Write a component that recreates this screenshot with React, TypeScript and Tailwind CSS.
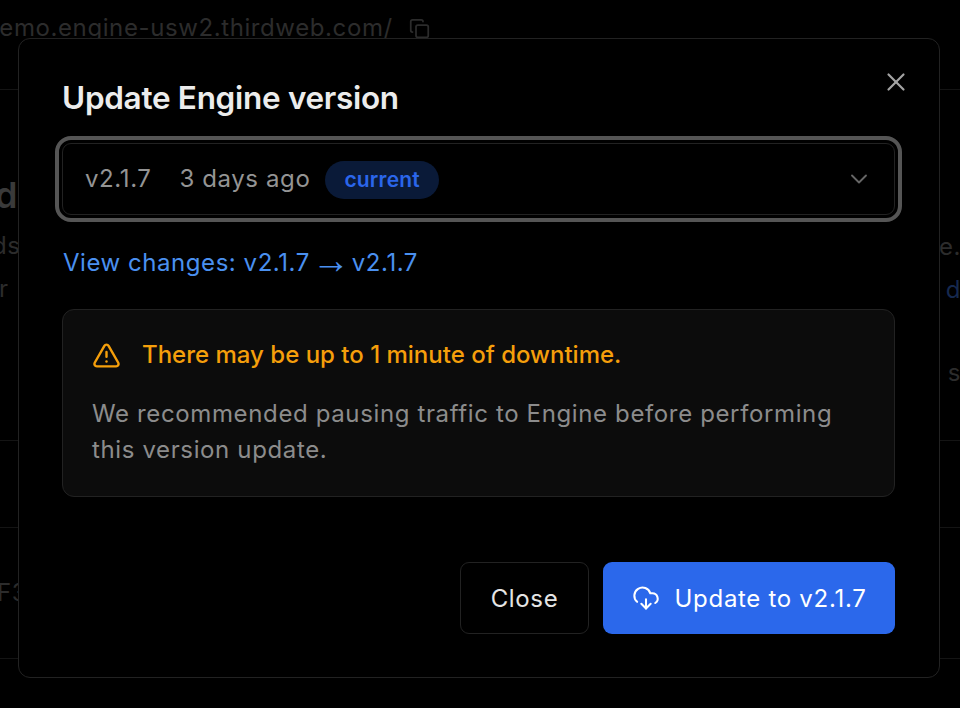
import { ChevronDown, CloudDownload, Copy, TriangleAlert, X } from "lucide-react";

function BackgroundPage() {
  return (
    <div className="h-[708px] w-[960px] overflow-hidden bg-black tracking-[0.6px]">
      <div className="flex h-[90px] items-start gap-4 border-b border-[#141414] pt-[10px]">
        <span className="-ml-[16px] text-[24px] leading-[36px] whitespace-nowrap text-[#2c2c2c]">
          demo.engine-usw2.thirdweb.com/
        </span>
        <Copy className="mt-[8px] size-[21px] text-[#2c2c2c]" strokeWidth={2} />
      </div>
      <div className="flex h-[351px] justify-between border-b border-[#141414] text-[#2c2c2c]">
        <div className="flex flex-col">
          <span className="mt-[80px] -ml-[5px] text-[36px] leading-[50px] font-semibold text-[#3a3a3a]">d</span>
          <span className="-ml-[8px] mt-[8px] text-[24px] leading-[36px]">ds</span>
          <span className="-ml-[1px] mt-[7px] text-[24px] leading-[36px]">r</span>
        </div>
        <div className="flex flex-col items-end">
          <span className="mt-[139px] -mr-[1px] text-[24px] leading-[36px]">e.</span>
          <span className="mt-[7px] -mr-[1px] text-[24px] leading-[36px] text-[#16294f]">d</span>
          <span className="mt-[47px] -mr-[1px] text-[24px] leading-[36px]">s</span>
        </div>
      </div>
      <div className="h-[87px] border-b border-[#141414]" />
      <div className="flex h-[131px] items-center border-b border-[#141414] text-[24px] text-[#2c2c2c]">
        <span className="-ml-[3px]">F3</span>
      </div>
    </div>
  );
}

function VersionSelect() {
  return (
    <div className="flex h-[72px] items-center justify-between rounded-[9px] border border-[#222222] px-[22px] outline-[4.5px] outline-offset-[3px] outline-[#555555]">
      <div className="flex items-center text-[24px] tracking-[0.6px] text-[#949494]">
        <span>v2.1.7</span>
        <span className="ml-[28px]">3 days ago</span>
        <span className="mt-[2px] ml-[15px] flex h-[38px] items-center rounded-full bg-[#0a1a38] px-[19px] text-[21px] font-semibold tracking-[0.2px] text-[#2b66ea]">
          current
        </span>
      </div>
      <ChevronDown className="-mr-[1px] size-[28px] text-[#666666]" strokeWidth={1.6} />
    </div>
  );
}

function DowntimeNotice() {
  return (
    <div className="mt-[28px] h-[188px] rounded-[12px] border border-[#222222] bg-[#0c0c0c] px-[29px] pt-[27px]">
      <div className="flex items-center gap-[21px] text-[24px] leading-[36px] font-medium text-[#f59f0b]">
        <TriangleAlert className="size-[29px] shrink-0" strokeWidth={2} />
        <span>There may be up to 1 minute of downtime.</span>
      </div>
      <p className="mt-[23px] text-[24px] leading-[36px] tracking-[0.63px] text-[#8c8c8c]">
        We recommended pausing traffic to Engine before performing this version update.
      </p>
    </div>
  );
}

export default function App() {
  return (
    <div className="relative h-[708px] w-[960px] overflow-hidden font-['Inter',sans-serif] [font-optical-sizing:none]">
      <BackgroundPage />
      <div className="absolute top-[38px] left-[18px] flex h-[640px] w-[922px] flex-col rounded-[12px] border border-[#222222] bg-black pt-[36px] pr-[44px] pl-[43px]">
        <h2 className="text-[31.5px] leading-[46px] font-semibold tracking-[-0.3px] text-[#ececec]">
          Update Engine version
        </h2>
        <X className="absolute top-[28px] right-[28px] size-[30px] text-[#a3a3a3]" strokeWidth={1.75} />
        <div className="mt-[22px]">
          <VersionSelect />
        </div>
        <a className="mt-[30px] ml-[1px] flex items-center text-[24px] leading-[36px] tracking-[0.55px] text-[#4a90f0]">
          View changes: v2.1.7
          <span className="mx-[2px] -translate-y-[3px] font-['Liberation_Sans',sans-serif] text-[38px] leading-[36px] tracking-normal">→</span>
          v2.1.7
        </a>
        <DowntimeNotice />
        <div className="mt-[65px] flex justify-end gap-[14px]">
          <button className="h-[72px] w-[129px] rounded-[9px] border border-[#222222] pt-[2px] text-[24px] tracking-[0.65px] text-[#e5e5e5]">
            Close
          </button>
          <button className="flex h-[72px] w-[292px] items-center justify-center gap-[15px] rounded-[9px] bg-[#2b68eb] text-[24px] tracking-[0.7px] text-white">
            <CloudDownload className="size-[28px]" strokeWidth={1.75} />
            <span className="pt-[2px]">Update to v2.1.7</span>
          </button>
        </div>
      </div>
    </div>
  );
}
